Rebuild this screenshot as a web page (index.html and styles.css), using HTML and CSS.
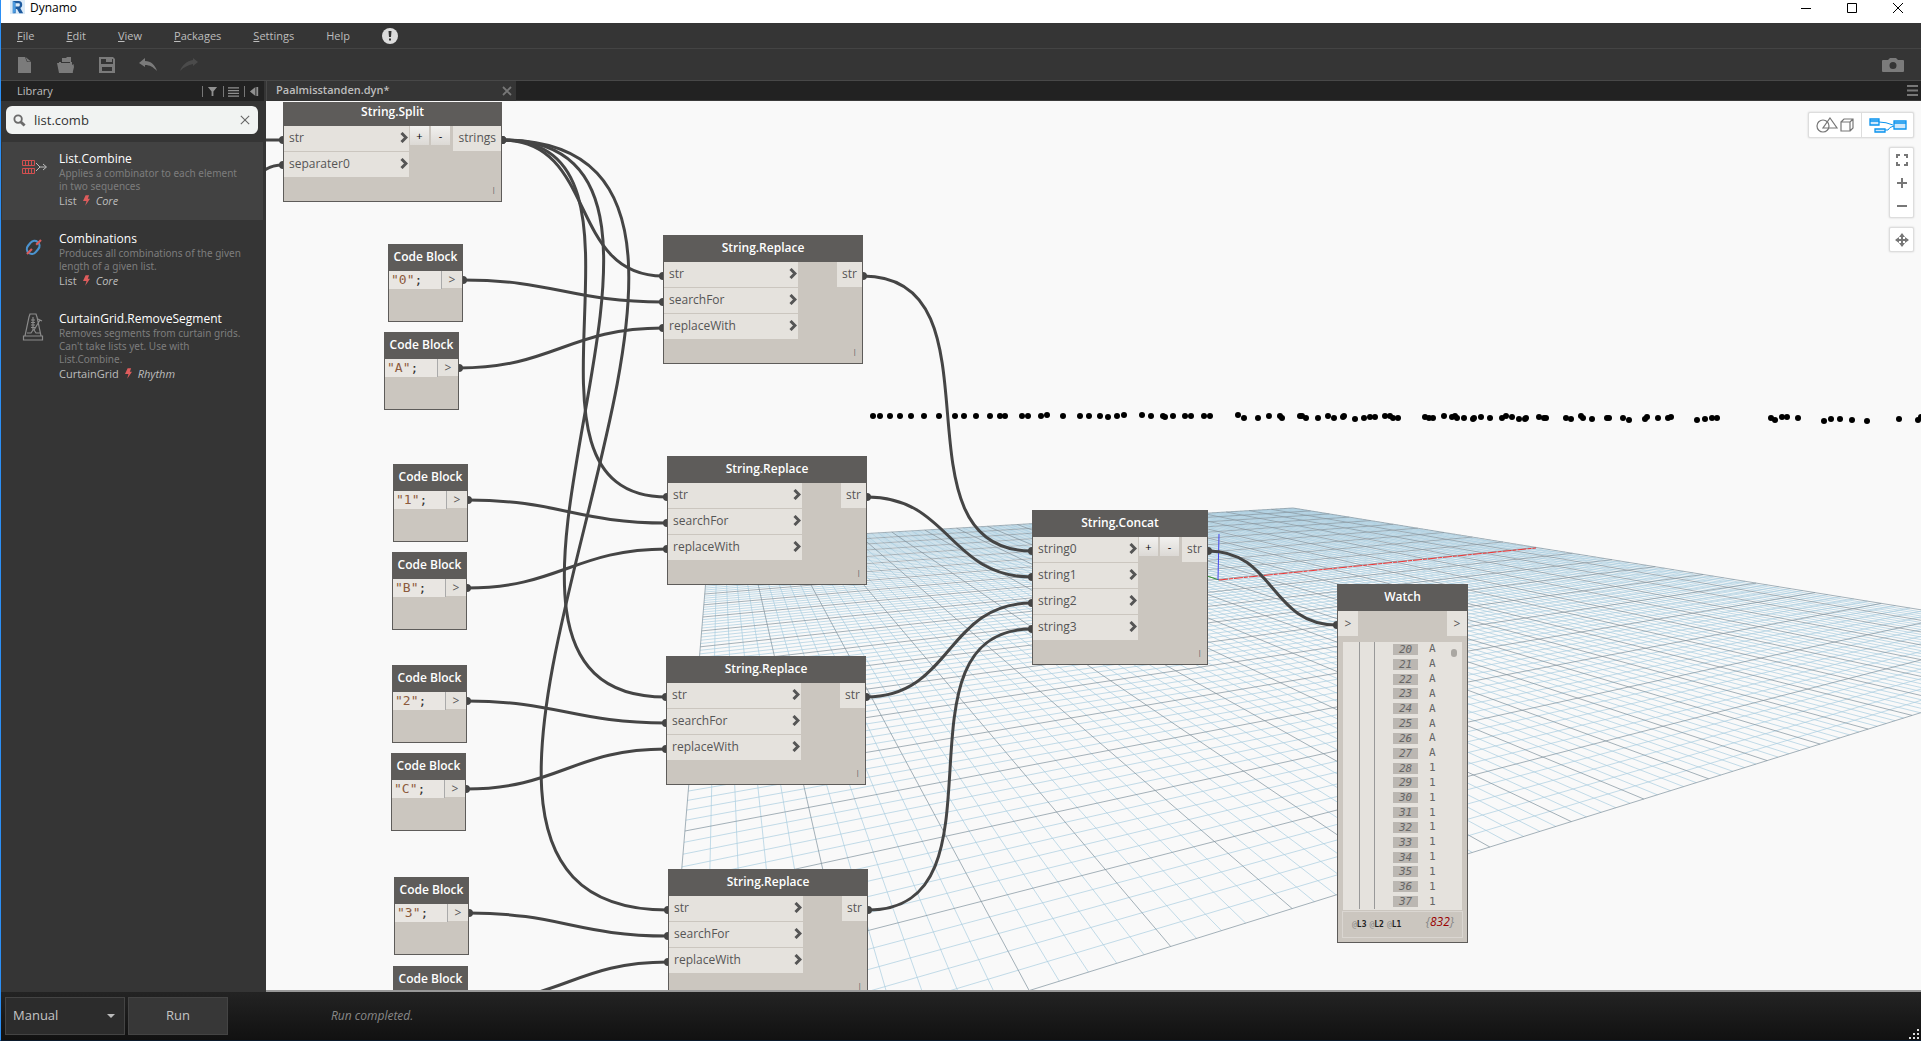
FILE: index.html
```html
<!DOCTYPE html>
<html lang="en">
<head>
<meta charset="utf-8">
<title>Dynamo</title>
<link rel="stylesheet" href="styles.css">
</head>
<body>
<div class="app">
  <header class="titlebar">
    <svg class="logo" viewBox="0 0 16 16" aria-hidden="true"><path fill="#dcebf8" d="M0 0h16v15H0z"/><path fill="#1d5a9e" d="M3 1h6c3 0 4 1.500 4 4 0 2-1 3-2 3.500L14 14h-4L7.500 9.500H6V14H3z"/><path fill="#4c9be0" d="M3 1l3 2v10l-3 1z"/><path fill="#dcebf8" d="M6 3.500h3c1 0 1.500.5 1.500 1.500S10 7 9 7H6z"/></svg>
    <h1 class="app-name">Dynamo</h1>
    <div class="window-buttons">
      <button class="win-btn" aria-label="Minimize"><svg viewBox="0 0 12 12"><path d="M1 6.500h10"/></svg></button>
      <button class="win-btn" aria-label="Maximize"><svg viewBox="0 0 12 12"><path d="M1.500 1.500h9v9h-9z"/></svg></button>
      <button class="win-btn" aria-label="Close"><svg viewBox="0 0 12 12"><path d="M1 1l10 10M11 1L1 11"/></svg></button>
    </div>
  </header>
  <nav class="menubar">
    <a href="#"><u>F</u>ile</a><a href="#"><u>E</u>dit</a><a href="#"><u>V</u>iew</a><a href="#"><u>P</u>ackages</a><a href="#"><u>S</u>ettings</a><a href="#">Help</a>
    <button class="notice" aria-label="Notifications"><svg viewBox="0 0 16 16"><circle cx="8" cy="8" r="8" fill="#dcdcdc"/><path fill="#333" d="M6.500 3h3l-.5 6H7zM7 10.500h2v2H7z"/></svg></button>
  </nav>
  <div class="toolbar">
    <button class="tool" aria-label="New"><svg viewBox="0 0 20 18"><path fill="#7b7b7b" d="M3 1h7l2 5h4v11H3z"/><path fill="#7b7b7b" d="M10.500 1l5.500 4.500h-3.500z"/></svg></button>
    <button class="tool" aria-label="Open"><svg viewBox="0 0 20 18"><path fill="#7b7b7b" d="M6 5V2h4l1-1h4v5h1v3l1.500-1 .5 3-1.500 6H3L1 7h2V6h3zM1 7h13l3 10H3z"/><path stroke="#353535" fill="none" d="M5 6.500h9"/></svg></button>
    <button class="tool" aria-label="Save"><svg viewBox="0 0 20 18"><path fill="#7b7b7b" fill-rule="evenodd" d="M2 1h14l2 2v14H2zM4 3v5h12V3h-1v3H9V3zM5 11v4h10v-4z"/><path fill="#7b7b7b" d="M12 3h2v2h-2z"/></svg></button>
    <button class="tool" aria-label="Undo"><svg viewBox="0 0 20 18"><path fill="#7b7b7b" d="M1 7l6-5v3c6 0 10 4 12 10-4-4-7-6-12-6v2z"/></svg></button>
    <button class="tool" aria-label="Redo" disabled><svg viewBox="0 0 20 18"><path fill="#4b4b4b" d="M19 6l-5-4v2C8 5 3 9 1 15c4-4 8-6 13-7v2z"/></svg></button>
    <button class="tool camera" aria-label="Export image"><svg viewBox="0 0 22 16"><path fill="#7b7b7b" fill-rule="evenodd" d="M1 3h5l2-2h6l2 2h5q1 0 1 1v10q0 1-1 1H1q-1 0-1-1V4q0-1 1-1zM11 5a3.500 3.500 0 100 7 3.500 3.500 0 000-7z"/></svg></button>
  </div>
  <main class="main">
    <aside class="library">
      <div class="library-head">
        <h2>Library</h2>
        <button aria-label="Filter"><svg viewBox="0 0 12 12"><path fill="#909090" d="M1 1h10L7 6v5H5V6z"/></svg></button>
        <button aria-label="Layout"><svg viewBox="0 0 12 12"><path stroke="#909090" stroke-width="1.500" d="M0 2h12M0 5h12M0 8h12M0 11h12"/></svg></button>
        <button aria-label="Collapse"><svg viewBox="0 0 12 12"><path fill="#909090" d="M7 1v10L1 6zM8 1h2v10H8z"/></svg></button>
      </div>
      <form class="search" role="search">
        <svg class="lens" viewBox="0 0 14 14"><circle cx="5.500" cy="5.500" r="4" fill="none" stroke="#6b6b6b" stroke-width="2"/><path stroke="#6b6b6b" stroke-width="3" d="M8.500 8.500l4 4"/></svg>
        <input type="text" aria-label="Search library" value="list.comb">
        <button type="button" aria-label="Clear"><svg viewBox="0 0 12 12"><path stroke="#666" stroke-width="1.300" d="M1 1l10 10M11 1L1 11"/></svg></button>
      </form>
      <ul class="results">
        <li class="result selected">
          <svg class="result-icon" viewBox="0 0 28 30"><g fill="none" stroke="#d24f4f"><path d="M1.500 8.500h12v5h-12zM1.500 16.500h12v5h-12z"/><path d="M4.500 9v5M7.500 9v5M10.500 9v5M4.500 17v5M7.500 17v5M10.500 17v5"/></g><path fill="none" stroke="#bdbdbd" d="M15 11l4 4-4 4M18 15h7M22 12l3.500 3-3.500 3"/></svg>
          <div class="result-text"><h3>List.Combine</h3><p class="desc">Applies a combinator to each element in two sequences</p><p class="meta">List <svg class="bolt" viewBox="0 0 8 12"><path d="M3 0h4L5.500 4H8L2.500 12 4 6.500H0z"/></svg> <i>Core</i></p></div>
        </li>
        <li class="result">
          <svg class="result-icon" viewBox="0 0 28 30"><g fill="none" stroke="#4b93cf" stroke-width="2.200"><rect x="7.500" y="8.500" width="10" height="14" rx="5" transform="rotate(40 12.500 15)"/></g><path stroke="#d65c5c" stroke-width="2.200" stroke-dasharray="7 6 7" d="M6 22L20 8"/></svg>
          <div class="result-text"><h3>Combinations</h3><p class="desc">Produces all combinations of the given length of a given list.</p><p class="meta">List <svg class="bolt" viewBox="0 0 8 12"><path d="M3 0h4L5.500 4H8L2.500 12 4 6.500H0z"/></svg> <i>Core</i></p></div>
        </li>
        <li class="result">
          <svg class="result-icon" viewBox="0 0 28 30"><g fill="none" stroke="#8b8b8b" stroke-width="1.200"><path d="M9 2h6l1 3 4 19H4L8 5zM2.500 24h19v4h-19zM6 21h4l2-3h1l2 3h4M12 5v13M10 8h4M10 10.500h4M10 13h4M10 15.500h4M13 18l6-10M17 7l4 2"/></g></svg>
          <div class="result-text"><h3>CurtainGrid.RemoveSegment</h3><p class="desc">Removes segments from curtain grids. Can't take lists yet. Use with List.Combine.</p><p class="meta">CurtainGrid <svg class="bolt" viewBox="0 0 8 12"><path d="M3 0h4L5.500 4H8L2.500 12 4 6.500H0z"/></svg> <i>Rhythm</i></p></div>
        </li>
      </ul>
    </aside>
    <section class="work">
      <div class="tabs">
        <div class="tab"><a href="#">Paalmisstanden.dyn*</a><button aria-label="Close tab"><svg viewBox="0 0 10 10"><path stroke="#777" stroke-width="1.800" d="M1 1l8 8M9 1L1 9"/></svg></button></div>
        <button class="tab-menu" aria-label="Tab list"><svg viewBox="0 0 11 11"><path stroke="#777" stroke-width="2" d="M0 1h11M0 5.500h11M0 10h11"/></svg></button>
      </div>
      <div class="canvas">
        <svg class="scene" aria-hidden="true">
          <path id="minor" class="minor"/>
          <path id="major" class="major"/>
          <path stroke="#e33" stroke-dasharray="9 1 4 1" d="M953 478L1270 446"/>
          <path stroke="#3a9a3a" d="M953 478L938 473"/>
          <path stroke="#44e" d="M952 478L953 432"/>
          <g id="points" class="points"></g>
          <g id="wires" class="wires"></g>
        </svg>
        <div id="nodes"></div>
        <div class="view-controls">
          <div class="view-toggle">
            <button aria-label="3D preview"><svg viewBox="0 0 38 16"><g fill="none" stroke="#777" stroke-width="1.200"><circle cx="7" cy="9" r="6"/><path d="M14 1l7 10H7zM25 5h9v9h-9zM25 5l3-3h9v9l-3 3M34 5l3-3"/></g></svg></button>
            <button aria-label="Graph view"><svg viewBox="0 0 38 16"><g fill="#cfe8fb" stroke="#0a93ee" stroke-width="1.300"><path fill="none" stroke-width="1" d="M10 5q7 0 14 3M16 13h3q1-3 6-4"/><path d="M1 2h9v6H1zM6 12h10v3H6zM25 4h12v8H25z"/><path d="M1 4h9M25 6h12"/></g></svg></button>
          </div>
          <div class="zoom-box">
            <button aria-label="Zoom to fit"><svg viewBox="0 0 14 14"><path fill="none" stroke="#777" stroke-width="2" d="M2 5V2h3M9 2h3v3M12 9v3H9M5 12H2V9"/></svg></button>
            <button aria-label="Zoom in"><svg viewBox="0 0 14 14"><path stroke="#777" stroke-width="2" d="M2 7h10M7 2v10"/></svg></button>
            <button aria-label="Zoom out"><svg viewBox="0 0 14 14"><path stroke="#777" stroke-width="2" d="M2 7h10"/></svg></button>
          </div>
          <div class="zoom-box"><button aria-label="Pan"><svg viewBox="0 0 14 14"><path stroke="#777" stroke-width="2" d="M1 7h12M7 1v12"/><path fill="#777" d="M7 0l3 4H4zM7 14l3-4H4zM0 7l4-3v6zM14 7l-4-3v6z"/></svg></button></div>
        </div>
      </div>
    </section>
  </main>
  <footer class="runbar">
    <label class="mode"><select aria-label="Run mode"><option>Manual</option><option>Automatic</option></select><svg viewBox="0 0 8 4"><path fill="#bbb" d="M0 0h8L4 4z"/></svg></label>
    <button class="run">Run</button>
    <output class="status">Run completed.</output>
    <svg class="grip" viewBox="0 0 12 12"><path fill="#ddd" d="M9 1h2v2H9zM9 5h2v2H9zM5 5h2v2H5zM9 9h2v2H9zM5 9h2v2H5zM1 9h2v2H1z"/></svg>
  </footer>
</div>
<script src="graph.js"></script>
</body>
</html>
```
FILE: graph.js
```js
// Nodes on the canvas: position, kind and ports.
const nodes = {
  split: { x: 17, y: -3, w: 219, pw: 125, title: 'String.Split', ins: ['str', 'separater0'], out: 'strings', vary: true },
  r0: { x: 397, y: 133, w: 200, pw: 134, title: 'String.Replace', ins: ['str', 'searchFor', 'replaceWith'], out: 'str' },
  r1: { x: 401, y: 354, w: 200, pw: 134, title: 'String.Replace', ins: ['str', 'searchFor', 'replaceWith'], out: 'str' },
  r2: { x: 400, y: 554, w: 200, pw: 134, title: 'String.Replace', ins: ['str', 'searchFor', 'replaceWith'], out: 'str' },
  r3: { x: 402, y: 767, w: 200, pw: 134, title: 'String.Replace', ins: ['str', 'searchFor', 'replaceWith'], out: 'str' },
  concat: { x: 766, y: 408, w: 176, pw: 105, title: 'String.Concat', ins: ['string0', 'string1', 'string2', 'string3'], out: 'str', vary: true },
  watch: { x: 1071, y: 482, w: 131, title: 'Watch', watch: true },
  c0: { x: 122, y: 142, w: 75, title: 'Code Block', code: '0' },
  cA: { x: 118, y: 230, w: 75, title: 'Code Block', code: 'A' },
  c1: { x: 127, y: 362, w: 75, title: 'Code Block', code: '1' },
  cB: { x: 126, y: 450, w: 75, title: 'Code Block', code: 'B' },
  c2: { x: 126, y: 563, w: 75, title: 'Code Block', code: '2' },
  cC: { x: 125, y: 651, w: 75, title: 'Code Block', code: 'C' },
  c3: { x: 128, y: 775, w: 75, title: 'Code Block', code: '3' },
  cD: { x: 127, y: 864, w: 75, title: 'Code Block', code: '' }
};
const links = [
  ['split', 'r0', 0], ['split', 'r1', 0], ['split', 'r2', 0], ['split', 'r3', 0],
  ['c0', 'r0', 1], ['cA', 'r0', 2], ['c1', 'r1', 1], ['cB', 'r1', 2],
  ['c2', 'r2', 1], ['cC', 'r2', 2], ['c3', 'r3', 1], ['cD', 'r3', 2],
  ['r0', 'concat', 0], ['r1', 'concat', 1], ['r2', 'concat', 2], ['r3', 'concat', 3],
  ['concat', 'watch', 0]
];
const chevron = '<svg class="chevron" viewBox="0 0 8 11"><path d="M1.500 1l4.500 4.500L1.500 10"/></svg>';

function body(n) {
  if (n.code === '') return '';
  if (n.code) {
    return `<div class="code-row"><code contenteditable="true" spellcheck="false"><span>"${n.code}"</span>;</code><div class="port code-out">&gt;</div></div>`;
  }
  if (n.watch) {
    let rows = '';
    for (let i = 20; i < 38; i++) rows += `<li><i>${i}</i><span>${i < 28 ? 'A' : '1'}</span></li>`;
    return `<div class="watch-ports"><div class="port">&gt;</div><div class="port">&gt;</div></div>
      <div class="tree"><ul>${rows}</ul></div>
      <div class="tree-foot"><span class="levels"><span>@<b>L3</b></span><span>@<b>L2</b></span><span>@<b>L1</b></span></span><i class="count">{<b>832</b>}</i></div>`;
  }
  return `<div class="ports"><div class="ins" style="width:${n.pw}px">${n.ins.map(t => `<div class="port">${t}${chevron}</div>`).join('')}</div>
    ${n.vary ? '<div class="vary"><button>+</button><button>-</button></div>' : ''}
    <div class="port out">${n.out}</div></div><div class="lacing">|</div>`;
}

document.getElementById('nodes').innerHTML = Object.values(nodes).map(n =>
  `<article class="node ${'code' in n ? 'code-block' : ''}" style="left:${n.x}px;top:${n.y}px;width:${n.w}px"><h4>${n.title}</h4>${body(n)}</article>`).join('');

// Wires
let wires = '';
function wire(x0, y0, x1, y1) {
  const o = 0.453 * Math.hypot(x1 - x0, y1 - y0);
  wires += `<path d="M${x0} ${y0}C${x0 + o} ${y0} ${x1 - o} ${y1} ${x1} ${y1}"/><circle cx="${x0}" cy="${y0}" r="4"/><circle cx="${x1}" cy="${y1}" r="4"/>`;
}
for (const [a, b, i] of links) {
  const s = nodes[a], t = nodes[b];
  wire(s.x + s.w, s.y + ('code' in s ? 36 : 41), t.x, t.y + 41 + i * 26);
}
wire(-140, 40, 17, 38);
wire(-60, 150, 17, 63);
document.getElementById('wires').innerHTML = wires;

// Ground plane: a 100 x 100 grid seen in perspective
const L = [443, 441], F = [396, 1003], R = [1872, 543], B = [1027, 406];
const dx1 = F[0] - R[0], dx2 = B[0] - R[0], sx = L[0] - F[0] + R[0] - B[0];
const dy1 = F[1] - R[1], dy2 = B[1] - R[1], sy = L[1] - F[1] + R[1] - B[1];
const det = dx1 * dy2 - dx2 * dy1;
const g = (sx * dy2 - dx2 * sy) / det, h = (dx1 * sy - sx * dy1) / det;
const at = (u, v) => {
  const w = 1 + g * u + h * v;
  return [0, 1].map(k => ((L[k] + (F[k] - L[k] + g * F[k]) * u + (B[k] - L[k] + h * B[k]) * v) / w).toFixed(1)).join(' ');
};
let minor = '', major = '';
for (let i = 0; i <= 100; i++) {
  const t = i / 100;
  const d = `M${at(t, 0)}L${at(t, 1)}M${at(0, t)}L${at(1, t)}`;
  if (i % 5) minor += d; else major += d;
}
document.getElementById('minor').setAttribute('d', minor);
document.getElementById('major').setAttribute('d', major);

// Geometry preview points: x, y pairs
const points = [
  607,314,614,314,624,314,634,314,645,314,658,314,673,314,689,314,698,314,710,314,724,314,734,314,739,314,756,314,762,314,
  775,314,781,313,797,314,814,314,823,314,834,314,842,315,851,314,858,313,876,313,885,314,897,314,899,315,907,314,919,314,
  925,314,938,314,944,314,972,313,978,316,992,316,1003,314,1014,314,1016,316,1034,314,1036,314,1040,316,1052,316,1062,314,
  1068,316,1077,315,1078,314,1089,317,1098,316,1104,315,1109,315,1119,314,1124,314,1127,316,1132,316,
  1159,315,1163,316,1167,316,1178,314,1186,315,1189,314,1191,316,1198,316,1207,317,1208,316,1215,315,1224,316,1236,316,
  1240,314,1246,315,1253,317,1259,317,1260,316,1273,315,1278,316,1280,316,1300,316,1305,317,1315,314,1317,316,1326,317,
  1341,316,1343,316,1357,316,1363,318,1379,317,1381,315,1392,316,1402,316,1405,315,1431,318,1439,317,1446,316,1451,316,
  1505,316,1509,318,1516,315,1521,315,1532,316,1558,319,1565,317,1574,317,1586,318,1601,319,1633,317,1652,318,1655,315
];
let dots = '';
for (let i = 0; i < points.length; i += 2) dots += `<circle cx="${points[i]}" cy="${points[i + 1]}" r="3"/>`;
document.getElementById('points').innerHTML = dots;
```
FILE: styles.css
```css
* { box-sizing: border-box; }
body { margin: 0; font-family: "Open Sans", "Noto Sans", sans-serif; font-size: 12px; }
h1, h2, h3, h4, p, ul { margin: 0; padding: 0; font-weight: 400; }
ul { list-style: none; }
button { margin: 0; padding: 0; border: 0; background: none; font: inherit; color: inherit; }
svg { display: block; }
a { color: inherit; text-decoration: none; }

.app { display: flex; flex-direction: column; height: 100vh; border-left: 1px solid #2b8ff5; border-bottom: 1px solid #0b1a2c; background: #353535; overflow: hidden; }

.titlebar { display: flex; flex: none; align-items: flex-start; height: 23px; padding-left: 9px; background: #fff; }
.logo { width: 15px; height: 15px; }
.app-name { margin-left: 5px; font-size: 12px; line-height: 16px; color: #000; }
.window-buttons { display: flex; margin-left: auto; }
.win-btn { width: 46px; height: 14px; padding-left: 17px; }
.win-btn svg { width: 12px; height: 12px; margin-top: 1px; }
.win-btn path { fill: none; stroke: #000; stroke-width: 1; }

.menubar { display: flex; flex: none; align-items: center; gap: 32px; height: 26px; padding-left: 16px; border-bottom: 1px solid #444; font-size: 11px; color: #bdbdbd; }
.notice svg { width: 16px; height: 16px; }

.toolbar { display: flex; flex: none; align-items: center; gap: 21px; height: 32px; padding: 0 17px 0 14px; border-bottom: 1px solid #484848; }
.tool svg { width: 20px; height: 18px; }
.camera { margin-left: auto; }
.camera svg { width: 22px; height: 16px; }

.main { display: flex; flex: 1; min-height: 0; }

.library { flex: none; width: 265px; }
.library-head { display: flex; align-items: center; width: 263px; height: 20px; padding: 0 4px 0 16px; background: #222; color: #bdbdbd; }
.library-head h2 { flex: 1; font-size: 11px; line-height: 20px; }
.library-head button { padding-left: 4px; border-left: 1px solid #777; margin-left: 5px; }
.library-head svg { width: 11px; height: 11px; }

.search { display: flex; align-items: center; height: 28px; margin: 5px 8px 8px 5px; padding: 0 8px 0 7px; border-radius: 6px; background: #f1f3f2; }
.lens { flex: none; width: 13px; height: 13px; }
.search input { flex: 1; min-width: 0; margin-left: 8px; padding: 0; border: 0; outline: 0; background: none; font: 13px/20px "Open Sans", sans-serif; color: #333; }
.search button svg { width: 10px; height: 10px; }

.results { display: flex; flex-direction: column; gap: 2px; padding: 0 3px 0 1px; }
.result { display: flex; gap: 10px; padding: 8px 15px 12px 19px; }
.selected { background: #424242; }
.result-icon { flex: none; width: 28px; height: 30px; margin-top: 2px; }
.result-text { flex: 1; min-width: 0; color: #bdbdbd; }
.result h3 { font-size: 12px; line-height: 17px; color: #fff; }
.desc { font: 10px/13px "Noto Sans", sans-serif; color: #7d7d7d; }
.meta { display: flex; align-items: center; gap: 6px; font-size: 11px; line-height: 15px; }
.bolt { width: 7px; height: 11px; fill: #de5c5c; }

.work { display: flex; flex: 1; flex-direction: column; min-width: 0; }
.tabs { display: flex; flex: none; justify-content: space-between; align-items: center; height: 20px; background: #222; border-bottom: 1px solid #3a3a3a; }
.tab { display: flex; justify-content: space-between; align-items: center; width: 250px; height: 20px; padding: 0 4px 0 9px; border-left: 1px solid #484848; background: #353535; font-size: 11px; font-weight: 600; line-height: 18px; color: #bdbdbd; }
.tab a { padding-bottom: 2px; }
.tab svg { width: 10px; height: 10px; }
.tab-menu { margin-right: 3px; }
.tab-menu svg { width: 11px; height: 11px; }

.canvas { position: relative; flex: 1; min-height: 0; overflow: hidden; border-top: 1px solid #f9f9f9; border-bottom: 2px solid #999; background: #f9f9f9; }
.scene { position: absolute; left: 0; top: 0; width: 100%; height: 100%; }
.minor { fill: none; stroke: #a9cde0; stroke-width: 1; stroke-opacity: .7; }
.major { fill: none; stroke: #7f929d; stroke-width: 1; stroke-opacity: .7; }
.points { fill: #000; }
.wires path { fill: none; stroke: #454545; stroke-width: 3; }
.wires circle { fill: #454545; }

.node { position: absolute; border: 1px solid #5e5c5a; background: #cbc6bf; color: #555; }
.node h4 { height: 26px; background: #5e5c5a; color: #fff; font-size: 12px; font-weight: 600; line-height: 23px; text-align: center; white-space: nowrap; }
.ports { display: flex; }
.ins { display: flex; flex-direction: column; gap: 1px; }
.port { display: flex; justify-content: space-between; align-items: center; height: 25px; padding: 0 1px 2px 5px; background: #e5e2dd; line-height: 16px; }
.chevron { width: 8px; height: 11px; }
.chevron path { fill: none; stroke: #555; stroke-width: 3; }
.out { margin-left: auto; padding: 0 5px 2px; }
.vary { display: flex; gap: 2px; padding-left: 1px; }
.vary button { width: 19px; height: 19px; background: linear-gradient(#f2f1ef, #dcd9d5); color: #000; font-size: 11px; line-height: 17px; }
.lacing { height: 24px; padding-right: 5px; font-size: 8px; line-height: 24px; text-align: right; color: #555; }

.code-block { height: 78px; }
.code-row { display: flex; align-items: flex-start; }
.code-row code { flex: 1; height: 18px; padding-left: 2px; border-right: 1px solid #aaa; background: #e9e6e2; font: 13px/18px "DejaVu Sans Mono", monospace; color: #333; }
.code-row code span { color: #8c5a3c; }
.code-out { justify-content: center; width: 20px; height: 17px; padding: 0; }

.watch-ports { display: flex; justify-content: space-between; }
.watch-ports .port { width: 20px; padding: 0; justify-content: center; }
.tree { position: relative; height: 268px; margin: 6px 5px 0; padding: 0 8px 0 16px; background: #e5e2dd; }
.tree ul { display: grid; grid-auto-rows: 1fr; height: 267px; background: linear-gradient(#999, #999) 0 0 / 1px 100% no-repeat, linear-gradient(#999, #999) 15px 0 / 1px 100% no-repeat; }
.tree li { display: flex; align-items: center; gap: 11px; padding-left: 34px; font: 11px/10px "DejaVu Sans Mono", monospace; color: #666; }
.tree i { width: 25px; height: 11px; background: #bbb7b2; line-height: 11px; text-align: center; }
.tree::after { content: ""; position: absolute; right: 5px; top: 7px; width: 6px; height: 8px; border-radius: 3px; background: #aaa7a2; }
.tree-foot { display: flex; justify-content: space-between; align-items: center; height: 27px; margin: 1px 4px 4px; padding: 0 8px 0 9px; border: 1px solid #dad6d1; font: 8px/12px "DejaVu Sans Mono", monospace; color: #888; }
.levels { display: flex; gap: 3px; }
.levels b { color: #222; }
.count { padding-bottom: 6px; font-family: "Open Sans", sans-serif; font-size: 12px; }
.count b { font-weight: 400; color: #900; }

.view-controls { position: absolute; right: 7px; top: 10px; display: flex; flex-direction: column; align-items: flex-end; gap: 9px; }
.view-toggle, .zoom-box { display: flex; border: 1px solid #ddd; border-radius: 2px; background: #fff; box-shadow: 0 0 2px #ccc; }
.view-toggle button { display: flex; align-items: center; justify-content: center; width: 52px; height: 24px; }
.view-toggle button + button { border-left: 1px solid #ddd; }
.view-toggle svg { width: 38px; height: 16px; }
.zoom-box { flex-direction: column; }
.zoom-box button { display: flex; align-items: center; justify-content: center; width: 23px; height: 23px; }
.zoom-box svg { width: 14px; height: 14px; }

.runbar { display: flex; flex: none; align-items: center; height: 48px; padding: 0 1px 0 4px; background: linear-gradient(#232323, #111); color: #c4c4c4; font-size: 13px; }
.mode { position: relative; width: 120px; height: 38px; }
.mode select { width: 100%; height: 100%; padding: 0 7px 2px; border: 1px solid #444; border-radius: 0; appearance: none; background: #2c2c2c; color: inherit; font: inherit; }
.mode svg { position: absolute; right: 10px; top: 17px; width: 8px; height: 4px; }
.run { width: 100px; height: 38px; margin-left: 3px; padding-bottom: 2px; border: 1px solid #444; background: #373737; }
.status { margin-left: 103px; padding-bottom: 2px; font-size: 12px; font-style: italic; color: #888; }
.grip { align-self: flex-end; width: 12px; height: 12px; margin-left: auto; }
```
